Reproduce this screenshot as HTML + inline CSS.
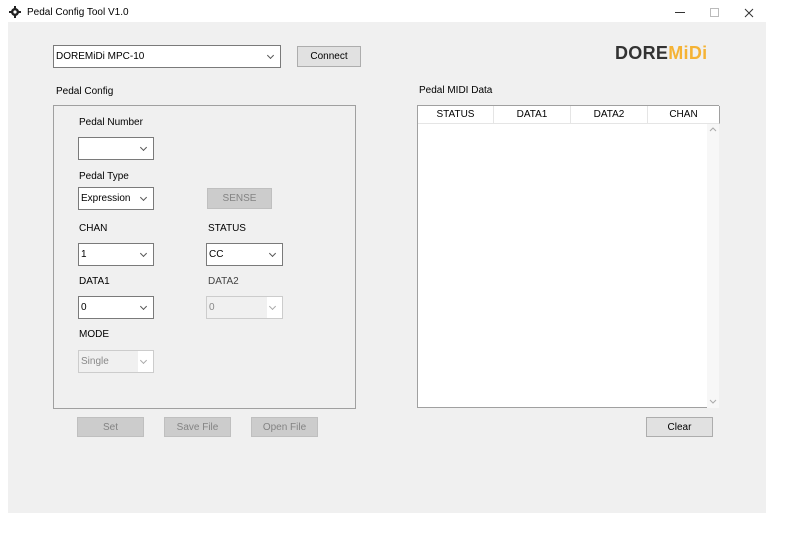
<!DOCTYPE html><html><head><style>
body{margin:0;width:796px;height:534px;background:#fff;font-family:"Liberation Sans",sans-serif;font-size:10px;color:#000;position:relative;overflow:hidden}
.a{position:absolute}
.bg{left:8px;top:22px;width:758px;height:491px;background:#f0f0f0}
.cb{position:absolute;background:#fff;border:1px solid #7a7a7a;box-sizing:border-box;font-size:10px;line-height:22px;padding-left:2px}
.cb:after{content:"";position:absolute;right:7px;top:7px;width:4px;height:4px;border-right:1px solid #555;border-bottom:1px solid #555;transform:rotate(45deg)}
.dis{background:#f0f0f0;border-color:#ccc;color:#888}
.dis:before{content:"";position:absolute;right:0;top:0;bottom:0;width:15px;background:#fff}
.dis:after{border-color:#aaa}
.bt{position:absolute;background:#e1e1e1;border:1px solid #adadad;box-sizing:border-box;text-align:center;font-size:10px;line-height:20px}
.bd{background:#cccccc;border-color:#bfbfbf;color:#838383}
.lb{position:absolute;font-size:10px;line-height:12px}
</style></head><body>
<svg class="a" style="left:9px;top:6px" width="12" height="12" viewBox="0 0 12 12"><circle cx="6" cy="6" r="4" fill="#222"/><rect x="5" y="0" width="2" height="12" fill="#222"/><rect x="0" y="5" width="12" height="2" fill="#222"/><circle cx="6" cy="6" r="1.6" fill="#fff"/></svg>
<div class="a" style="left:27px;top:7px;font-size:10px">Pedal Config Tool V1.0</div>
<div class="a" style="left:675px;top:12px;width:10px;height:1px;background:#333"></div>
<div class="a" style="left:710px;top:8px;width:7px;height:7px;border:1px solid #bbb"></div>
<svg class="a" style="left:744px;top:8px" width="10" height="10" viewBox="0 0 10 10"><path d="M1 1L9 9M9 1L1 9" stroke="#333" stroke-width="1"/></svg>
<div class="a bg"></div>
<div class="cb" style="left:53px;top:45px;width:228px;height:23px;line-height:21px">DOREMiDi MPC-10</div>
<div class="bt" style="left:297px;top:46px;width:64px;height:21px">Connect</div>
<div class="a" style="left:615px;top:43px;font-size:18px;line-height:20px;font-weight:bold;letter-spacing:0.3px"><span style="color:#333">DORE</span><span style="color:#f5b335">MiDi</span></div>
<div class="lb" style="left:56px;top:86px">Pedal Config</div>
<div class="a" style="left:53px;top:105px;width:301px;height:302px;border:1px solid #a0a0a0"></div>
<div class="lb" style="left:79px;top:117px">Pedal Number</div>
<div class="cb" style="left:78px;top:137px;width:76px;height:23px"></div>
<div class="lb" style="left:79px;top:171px">Pedal Type</div>
<div class="cb" style="left:78px;top:187px;width:76px;height:23px">Expression</div>
<div class="bt bd" style="left:207px;top:188px;width:65px;height:21px">SENSE</div>
<div class="lb" style="left:79px;top:223px">CHAN</div>
<div class="lb" style="left:208px;top:223px">STATUS</div>
<div class="cb" style="left:78px;top:243px;width:76px;height:23px">1</div>
<div class="cb" style="left:206px;top:243px;width:77px;height:23px">CC</div>
<div class="lb" style="left:79px;top:276px">DATA1</div>
<div class="lb" style="left:208px;top:276px;color:#444">DATA2</div>
<div class="cb" style="left:78px;top:296px;width:76px;height:23px">0</div>
<div class="cb dis" style="left:206px;top:296px;width:77px;height:23px"><span style="position:relative">0</span></div>
<div class="lb" style="left:79px;top:329px">MODE</div>
<div class="cb dis" style="left:78px;top:350px;width:76px;height:23px"><span style="position:relative">Single</span></div>
<div class="bt bd" style="left:77px;top:417px;width:67px;height:20px">Set</div>
<div class="bt bd" style="left:164px;top:417px;width:67px;height:20px">Save File</div>
<div class="bt bd" style="left:251px;top:417px;width:67px;height:20px">Open File</div>
<div class="lb" style="left:419px;top:85px">Pedal MIDI Data</div>
<div class="a" style="left:417px;top:105px;width:302px;height:303px;background:#fff;border:1px solid #a0a0a0;box-sizing:border-box"></div>
<div class="a" style="left:707px;top:124px;width:12px;height:284px;background:#f7f7f7"></div>
<div class="a" style="left:418px;top:106px;width:302px;height:18px;border-bottom:1px solid #e5e5e5;border-right:1px solid #a0a0a0;box-sizing:border-box;display:flex;font-size:10px;line-height:18px;background:#fff">
<div style="width:75px;text-align:center;border-right:1px solid #e5e5e5">STATUS</div>
<div style="width:76px;text-align:center;border-right:1px solid #e5e5e5">DATA1</div>
<div style="width:76px;text-align:center;border-right:1px solid #e5e5e5">DATA2</div>
<div style="flex:1;text-align:center">CHAN</div></div>
<svg class="a" style="left:709px;top:127px" width="8" height="5"><path d="M1 4L4 1L7 4" stroke="#aaa" fill="none"/></svg>
<svg class="a" style="left:709px;top:399px" width="8" height="5"><path d="M1 1L4 4L7 1" stroke="#aaa" fill="none"/></svg>
<div class="bt" style="left:646px;top:417px;width:67px;height:20px">Clear</div>
</body></html>
